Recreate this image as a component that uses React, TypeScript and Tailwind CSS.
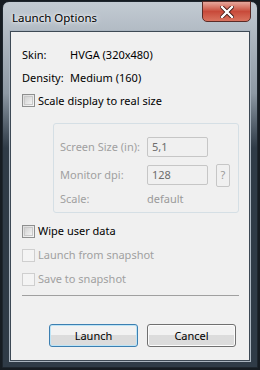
import React from "react";

const font = { fontFamily: '"Segoe UI", "Noto Sans", "Open Sans", sans-serif' };

function Check({ label, disabled }: { label: string; disabled?: boolean }) {
  return (
    <div className="flex items-center h-[24px]">
      <div
        className={
          "w-[13px] h-[13px] border " +
          (disabled
            ? "border-[#cfcfcf] bg-[#f4f4f4]"
            : "border-[#8e8f8f] bg-gradient-to-br from-[#dcdcdc] to-[#f8f8f8]")
        }
      >
        <div
          className={
            "m-[1px] w-[9px] h-[9px] " +
            (disabled ? "" : "border border-[#c9c9c9] bg-gradient-to-br from-[#d2d2d2] to-[#f3f3f3]")
          }
        />
      </div>
      <span className={"ml-[3px] whitespace-nowrap " + (disabled ? "text-[#a0a0a0]" : "text-black")}>{label}</span>
    </div>
  );
}

function Btn({ label, def }: { label: string; def?: boolean }) {
  return (
    <div
      className={
        "w-[89px] h-[23px] rounded-[3px] border flex items-center justify-center text-black bg-gradient-to-b from-[#f2f2f2] from-50% to-[#dcdcdc] to-50% " +
        (def ? "border-[#3c7fb1] shadow-[inset_0_0_0_1px_#bde4f6]" : "border-[#707070] shadow-[inset_0_0_0_1px_#fcfcfc]")
      }
    >
      {label}
    </div>
  );
}

export default function App() {
  return (
    <div className="w-[260px] h-[370px] bg-[#161c22] overflow-hidden text-[11px] leading-[16px]" style={font}>
      <div className="ml-[2px] mt-[1px] w-[256px] h-[367px] rounded-t-[7px] border border-[#1e262e] bg-gradient-to-b from-[#c3cbd3] via-[#8e99a4] via-25% to-[#2f3b47] to-40% flex flex-col px-[7px] pb-[6px] relative">
        <div className="h-[29px] flex items-start justify-between">
          <div className="pl-[2px] pt-[8px] text-[11.5px] text-black [text-shadow:0_0_6px_#ffffff,0_0_3px_#ffffff]">Launch Options</div>
          <div className="mt-[-1px] mr-[-1px] w-[49px] h-[21px] rounded-b-[5px] border border-[#5b2b26] bg-gradient-to-b from-[#e6a79c] via-[#c84a3a] via-50% to-[#d9735f] flex items-center justify-center">
            <svg width="14" height="12" viewBox="0 0 14 12">
              <path d="M2 1 L12 11 M12 1 L2 11" stroke="#3a1410" strokeWidth="4" strokeLinecap="square" />
              <path d="M2 1 L12 11 M12 1 L2 11" stroke="#ffffff" strokeWidth="2.4" strokeLinecap="square" />
            </svg>
          </div>
        </div>
        <div className="flex-1 border border-[#3d4955] shadow-[0_0_0_1px_#a9b4bf] bg-[#f0f0f0] flex flex-col pl-[11px] pt-[11px]">
          <div className="flex items-center h-[23px]">
            <span className="w-[48px]">Skin:</span>
            <span>HVGA (320x480)</span>
          </div>
          <div className="flex items-center h-[23px]">
            <span className="w-[48px]">Density:</span>
            <span>Medium (160)</span>
          </div>
          <div className="h-[23px] flex items-center">
            <Check label="Scale display to real size" />
          </div>
          <div className="mt-[11px] ml-[31px] w-[186px] h-[90px] border border-[#d5dfe5] rounded-[3px] flex flex-col pl-[6px] pt-[13px] text-[#a0a0a0]">
            <div className="flex items-center h-[20px]">
              <span className="w-[87px] whitespace-nowrap">Screen Size (in):</span>
              <div className="w-[61px] h-[20px] border border-[#c6c6c6] rounded-[2px] flex items-center pl-[4px] text-[#6d6d6d]">5,1</div>
            </div>
            <div className="flex items-center h-[20px] mt-[8px]">
              <span className="w-[87px] whitespace-nowrap">Monitor dpi:</span>
              <div className="w-[61px] h-[20px] border border-[#c6c6c6] rounded-[2px] flex items-center pl-[4px] text-[#6d6d6d]">128</div>
              <div className="ml-[8px] w-[14px] h-[23px] border border-[#c6c6c6] rounded-[2px] flex items-center justify-center text-[#9a9a9a]">?</div>
            </div>
            <div className="flex items-center h-[20px] mt-[4px]">
              <span className="w-[87px]">Scale:</span>
              <span className="text-[#9a9a9a]">default</span>
            </div>
          </div>
          <div className="mt-[6px]">
            <Check label="Wipe user data" />
            <Check label="Launch from snapshot" disabled />
            <Check label="Save to snapshot" disabled />
          </div>
          <div className="mt-[4px] w-[217px] h-[1px] bg-[#a0a0a0]" />
          <div className="mt-[28px] flex justify-end gap-[9px] pr-[13px]">
            <Btn label="Launch" def />
            <Btn label="Cancel" />
          </div>
        </div>
      </div>
    </div>
  );
}
